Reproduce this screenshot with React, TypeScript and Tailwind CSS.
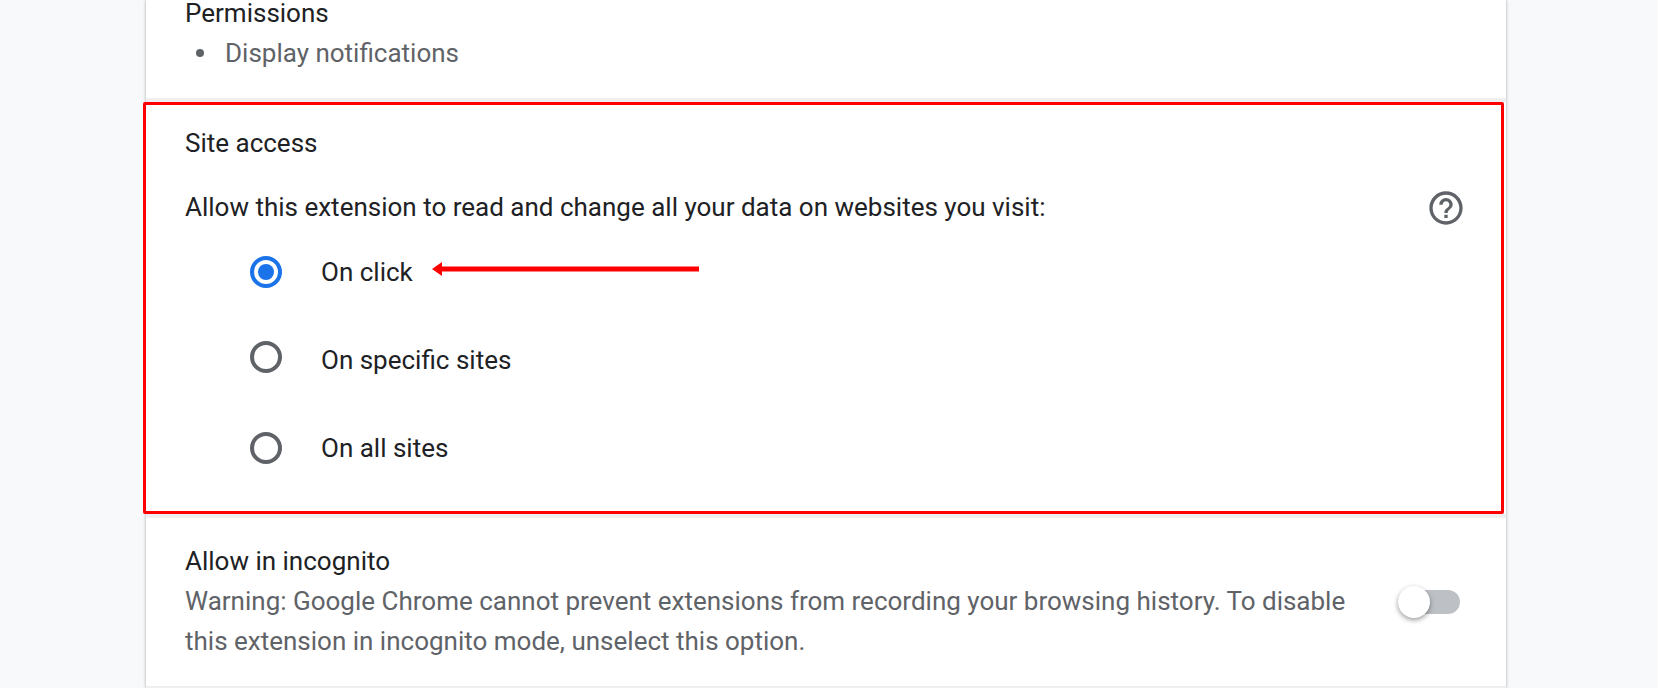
const options = [
  { label: 'On click', checked: true, nudge: false },
  { label: 'On specific sites', checked: false, nudge: true },
  { label: 'On all sites', checked: false, nudge: false },
]

function Radio({ checked, nudge }: { checked: boolean; nudge: boolean }) {
  if (checked) {
    return (
      <span className="flex h-8 w-8 items-center justify-center rounded-full border-[4px] border-[#1a73e8]">
        <span className="h-4 w-4 rounded-full bg-[#1a73e8]" />
      </span>
    )
  }
  return <span className={nudge ? '-mt-[6px] h-8 w-8 rounded-full border-[4px] border-[#5f6368]' : 'h-8 w-8 rounded-full border-[4px] border-[#5f6368]'} />
}

export default function App() {
  return (
    <div className="h-[688px] w-[1658px] overflow-hidden bg-[#f8f9fa] font-['Roboto',sans-serif] text-[26px] text-[#202124]">
      <div className="ml-[146px] h-[688px] w-[1360px] bg-white shadow-[0_0_3px_rgba(60,64,67,0.45)]">
        {/* Permissions */}
        <div className="h-[98px] pl-[39px]">
          <p className="leading-[26px]">Permissions</p>
          <ul className="mt-[13px] flex items-center leading-[28px] text-[#5f6368]">
            <li className="flex items-center">
              <span className="ml-[11px] mr-[21px] h-[8px] w-[8px] rounded-full bg-[#5f6368]" />
              Display notifications
            </li>
          </ul>
        </div>
        <div className="h-[4px] bg-[#efefef]" />

        {/* Site access */}
        <section className="relative -ml-[3px] h-[412px] w-[1361px] rounded-[2px] border-[3px] border-[#ff0000] bg-white pl-[39px]">
          <p className="pt-[24px] leading-[28px]">Site access</p>
          <div className="mt-[31px] flex items-center justify-between pr-[35px] leading-[28px]">
            <span className="-mt-[2px]">Allow this extension to read and change all your data on websites you visit:</span>
            <svg width="40" height="40" viewBox="0 0 24 24" fill="#5f6368">
              <path d="M11 18h2v-2h-2v2zm1-16C6.48 2 2 6.48 2 12s4.48 10 10 10 10-4.48 10-10S17.52 2 12 2zm0 18c-4.41 0-8-3.59-8-8s3.59-8 8-8 8 3.59 8 8-3.59 8-8 8zm0-14c-2.21 0-4 1.79-4 4h2c0-1.1.9-2 2-2s2 .9 2 2c0 2-3 1.75-3 5h2c0-2.25 3-2.5 3-5 0-2.21-1.79-4-4-4z" />
            </svg>
          </div>
          <div className="flex flex-col pl-[65px]">
            {options.map((o) => (
              <div key={o.label} className="flex h-[88px] items-center gap-[39px]">
                <Radio checked={o.checked} nudge={o.nudge} />
                <span>{o.label}</span>
              </div>
            ))}
          </div>
          {/* annotation arrow */}
          <svg width="267" height="14" viewBox="0 0 267 14" className="absolute left-[286px] top-[157px]">
            <path d="M0 7 10 0v4.5h257v5H10V14z" fill="#ff0000" />
          </svg>
        </section>
        <div className="h-[4px] bg-[#efefef]" />

        {/* Incognito */}
        <div className="flex h-[168px] items-center justify-between pl-[39px] pr-[46px] pt-[4px]">
          <div>
            <p className="leading-[28px]">Allow in incognito</p>
            <p className="mt-[6px] w-[1180px] leading-[40px] text-[#5f6368]">
              Warning: Google Chrome cannot prevent extensions from recording your browsing history. To disable this extension in incognito mode, unselect this option.
            </p>
          </div>
          <div className="relative -mt-[4px] h-[24px] w-[62px] rounded-full bg-[#bdc1c6]">
            <span className="absolute left-0 -top-[4px] h-[32px] w-[32px] rounded-full bg-white shadow-[0_2px_5px_rgba(0,0,0,0.4)]" />
          </div>
        </div>
        <div className="h-[4px] bg-[#efefef]" />
      </div>
    </div>
  )
}
